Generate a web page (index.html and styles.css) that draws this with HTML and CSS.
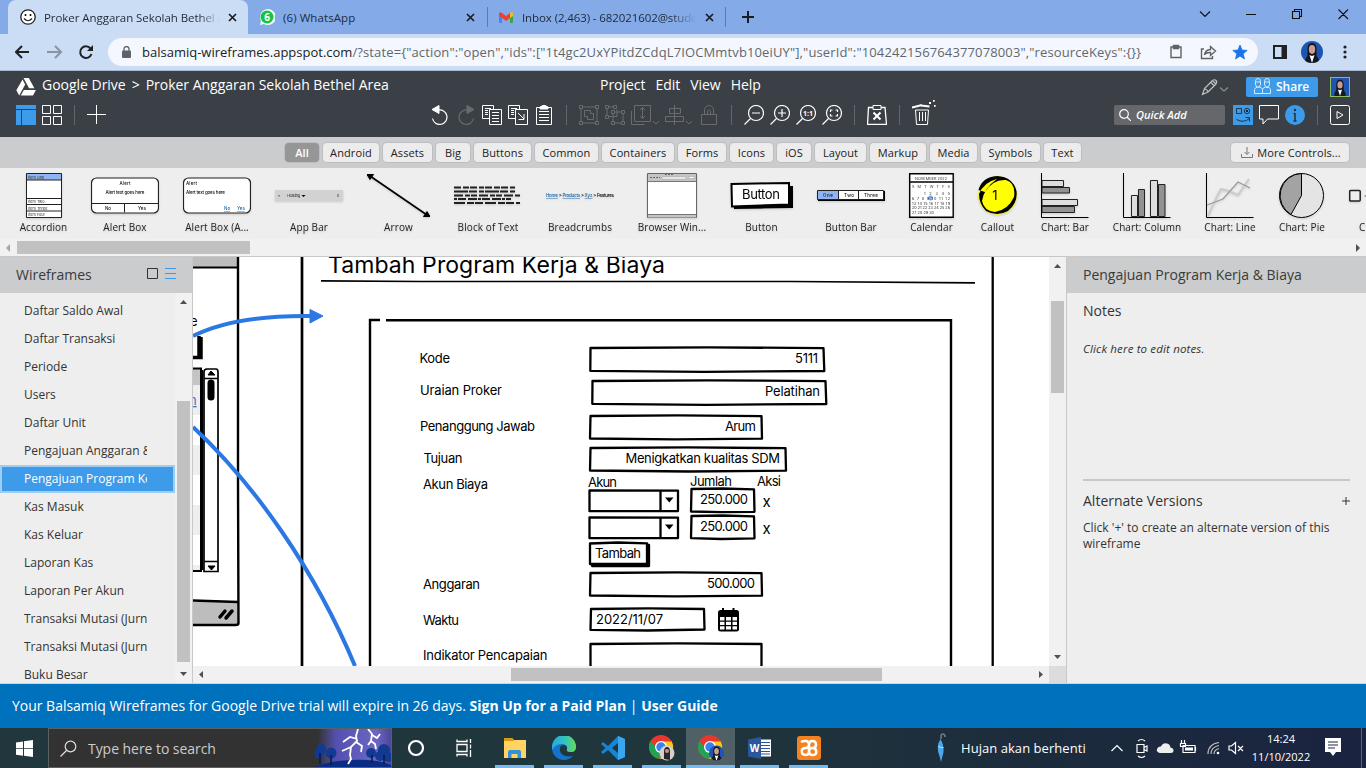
FILE: index.html
```html
<!DOCTYPE html>
<html lang="en">
<head>
<meta charset="utf-8">
<title>Proker Anggaran Sekolah Bethel Area</title>
<link rel="stylesheet" href="styles.css">
</head>
<body>
<svg class="defs" width="0" height="0">
  <defs>
    <g id="portrait">
      <rect width="22" height="22" fill="#1d55b0"/>
      <path d="M6.500 18V8q0-6 4.500-6t4.500 6v10z" fill="#15131c"/>
      <ellipse cx="11" cy="8.500" rx="3.200" ry="4.400" fill="#c99e90"/>
      <path d="M4 22q0-7 5-8l2 2 2-2q5 1 5 8z" fill="#17171f"/>
      <path d="M8.500 14l2.500 8 2.500-8-2.500 1z" fill="#fff"/>
    </g>
    <g id="chrome">
      <circle cx="12" cy="12" r="12" fill="#e8372c"/>
      <path d="M1.600 6A12 12 0 0 0 11 24l4-8-7-2z" fill="#22a353"/>
      <path d="M12 6.500h10.700A12 12 0 0 1 11 24l6-10z" fill="#fbc819"/>
      <circle cx="12" cy="12" r="6" fill="#fff"/><circle cx="12" cy="12" r="4.700" fill="#3c80ed"/>
    </g>
  </defs>
</svg>

<header class="tabs">
  <div class="tab tab-active">
    <svg width="16" height="16" viewBox="0 0 16 16"><circle cx="8" cy="8" r="7.200" fill="#fff" stroke="#222" stroke-width="1.300"/><circle cx="5.500" cy="6" r="1"/><circle cx="10.500" cy="6" r="1"/><path d="M4 9.500q4 4.500 8 0" fill="none" stroke="#222" stroke-width="1.200"/></svg>
    <span class="tab-title">Proker Anggaran Sekolah Bethel Area</span>
    <svg class="x" width="9" height="9" viewBox="0 0 9 9"><path d="M1 1l7 7M8 1l-7 7"/></svg>
  </div>
  <div class="tab tab-whatsapp">
    <svg width="16" height="16" viewBox="0 0 16 16"><path d="M1 16l1-4A8 8 0 1 1 5 15z" fill="#e9fff0"/><circle cx="8" cy="8" r="6.500" fill="#17c248"/><text x="8" y="12" text-anchor="middle" class="badge">6</text></svg>
    <span class="tab-title">(6) WhatsApp</span>
    <svg class="x" width="9" height="9" viewBox="0 0 9 9"><path d="M1 1l7 7M8 1l-7 7"/></svg>
  </div>
  <div class="tab tab-mail">
    <svg width="14" height="11" viewBox="0 0 14 11"><path d="M0 2h3v9H1q-1 0-1-1z" fill="#4285f4"/><path d="M11 2h3v8q0 1-1 1h-2z" fill="#34a853"/><path d="M11 1q3-2 3 1v2l-3 2z" fill="#fbbc04"/><path d="M0 2q0-3 3-1l4 3 4-3v5L7 9 3 6 0 4z" fill="#ea4335"/></svg>
    <span class="tab-title">Inbox (2,463) - 682021602@student</span>
    <svg class="x" width="9" height="9" viewBox="0 0 9 9"><path d="M1 1l7 7M8 1l-7 7"/></svg>
  </div>
  <svg class="newtab" width="12" height="12" viewBox="0 0 12 12"><path d="M6 0v12M0 6h12" stroke="#1b1d22" stroke-width="2"/></svg>
  <svg class="wincontrols" width="150" height="12" viewBox="1199 8 150 12" fill="none" stroke="#111" stroke-width="1.100"><path d="M1200 11.500l5 5 5-5M1246 14.500h10M1292.500 11.500h7v7h-7zM1294.500 11.500v-2h7v7h-2M1338.500 9.500l9.500 9.500M1348 9.500l-9.500 9.500"/></svg>
</header>

<nav class="address">
  <svg class="navicons" width="78" height="16" viewBox="15 44 78 16" fill="none" stroke="#202124" stroke-width="2"><path d="M29 52H16.500M22 46l-6 6 6 6"/><path d="M47 52h13M55 46l6 6-6 6" stroke="#8a92a3"/><path d="M90.500 48.500A5.800 5.800 0 1 0 91.500 54"/><path d="M93 45v6h-6z" fill="#202124" stroke="none"/></svg>
  <div class="urlbar">
    <svg width="9" height="12" viewBox="0 0 9 12"><rect y="4.500" width="9" height="7.500" rx="1" fill="#5f6368"/><path d="M2 5V3a2.500 2.500 0 0 1 5 0v2" fill="none" stroke="#5f6368" stroke-width="1.300"/></svg>
    <span class="url"><span class="host">balsamiq-wireframes.appspot.com</span><span class="query">/?state={"action":"open","ids":["1t4gc2UxYPitdZCdqL7IOCMmtvb10eiUY"],"userId":"104242156764377078003","resourceKeys":{}}</span></span>
    <svg class="urlicons" width="80" height="16" viewBox="1169 44 80 16" fill="none" stroke="#5f6368" stroke-width="1.400"><path d="M1171 47h10v10.500h-10z"/><path d="M1173.500 45.500h5v3h-5z" fill="#5f6368"/><path d="M1204 49h-2.500v9.500h11V56M1204.500 55q.5-5 6-5.500v-3l5 4.500-5 4.500v-3q-4-.3-6 2z"/><path d="M1240 45l2 5 5.200.4-4 3.400 1.300 5.200-4.500-2.900-4.500 2.900 1.300-5.200-4-3.400 5.200-.4z" fill="#1a73e8" stroke="#1a73e8" stroke-width=".8"/></svg>
  </div>
  <svg class="sidepanel" width="14" height="14" viewBox="0 0 14 14"><path d="M1 1h12v12H1z" fill="none" stroke="#202124" stroke-width="2"/><path d="M8.500 1H13v12H8.500z" fill="#202124"/></svg>
  <svg class="avatar-round" width="22" height="22" viewBox="0 0 22 22"><use href="#portrait"/></svg>
  <svg width="4" height="14" viewBox="0 0 4 14" fill="#202124"><circle cx="2" cy="2" r="1.600"/><circle cx="2" cy="7" r="1.600"/><circle cx="2" cy="12" r="1.600"/></svg>
</nav>

<section class="apphead">
  <div class="menurow">
    <svg class="drive" width="20" height="18" viewBox="0 0 20 18" fill="#fff"><path d="M7.500 0h5.300l5.600 10.300h-5.300zM6.500 1.600l2.700 5L3.200 17.500.3 12.300zM7.800 12h12.100l-2.900 5.500H4.800z"/></svg>
    <div class="crumb">Google Drive<b>&gt;</b>Proker Anggaran Sekolah Bethel Area</div>
    <div class="menu"><span>Project</span><span>Edit</span><span>View</span><span>Help</span></div>
    <svg class="pencil" width="28" height="18" viewBox="1201 77 28 18" fill="none" stroke="#bfc2c4" stroke-width="1.200"><path d="M1202.500 93.500l2-6 8-8q2-1.500 3.500 0t0 3.500l-8 8zM1210.500 81l4 4M1212.500 79.500l3.500 3.500M1204.500 88q3 .5 3.500 3"/><path d="M1220 86.500l4 3.500 4-3.500" stroke="#8d9194"/></svg>
    <div class="share"><svg width="17" height="16" viewBox="0 0 17 16" fill="none" stroke="#d5eafa" stroke-width="1"><path d="M1.500 6V3.500q0-3 2.500-3t2.500 3V6q0 3-2.500 3T1.500 6zM10.500 6V3.500q0-3 2.500-3t2.500 3V6q0 3-2.500 3t-2.500-3zM.5 15.500v-4q0-1.500 3-2.500l1 1 1-1q3 1 3 2.500v4zM8.500 11.500q0-1.500 3-2.500l1.500 1 1-1q2.500 1 2.500 2.500v4h-8M1.500 4h5M10.500 4h5"/></svg>Share</div>
    <svg class="avatar-square" width="20" height="20" viewBox="0 0 22 22"><use href="#portrait"/></svg>
  </div>
  <div class="toolrow">
    <svg width="20" height="20" viewBox="16 105 20 20" fill="#3d9be9"><path d="M16 105h20v4H16zM16 110h5v15h-5zM22 110h14v15H22z"/></svg>
    <svg width="20" height="20" viewBox="42 105 20 20" class="ln"><path d="M42.500 105.500h8v8h-8zM53.500 105.500h8v8h-8zM42.500 116.500h8v8h-8zM53.500 116.500h8v8h-8z"/></svg>
    <i class="div"></i>
    <svg width="20" height="20" viewBox="87 105 20 20" class="ln"><path d="M96.500 105v19M87 114.500h19"/></svg>
    <div class="tools">
      <svg width="20" height="20" viewBox="430 105 20 20" class="ln"><path d="M438 110a7.300 7.300 0 1 1-5.500 8.500" stroke-width="1.200"/><path d="M432 109.500l7-4v8z" fill="#fff"/></svg>
      <svg width="20" height="20" viewBox="456 105 20 20" class="dim"><path d="M468 110a7.300 7.300 0 1 0 5.500 8.500" stroke-width="1.200"/><path d="M474 109.500l-7-4v8z" fill="#686c6f"/></svg>
      <svg width="20" height="20" viewBox="482 105 20 20" class="ln"><path d="M489 118.500h-6.500v-13h11v4M489.500 109.500h12v15h-12zM485 108.500h6M485 110.500h3M485 112.500h3M485 114.500h3M492 112.500h7M492 115.500h7M492 118.500h7M492 121.500h7"/></svg>
      <svg width="20" height="20" viewBox="508 105 20 20" class="ln"><path d="M515 118.500h-6.500v-13h11v4M515.500 109.500h12v15h-12zM511 108.500h6M511 110.500h3M511 112.500h3M511 114.500h3M518 113l6 6M524 114v5.500h-5.500"/></svg>
      <svg width="20" height="20" viewBox="534 105 20 20" class="ln"><path d="M536.500 107.500h15v17h-15zM539 111.500h10M539 114.500h10M539 117.500h10M539 120.500h10"/><path d="M540 107l3-1.500h2l3 1.500v2h-8z" fill="#fff"/></svg>
      <i class="div"></i>
      <svg width="20" height="20" viewBox="579 105 20 20" class="dim"><path d="M579.500 105.500h3v3h-3zM595.500 105.500h3v3h-3zM579.500 121.500h3v3h-3zM595.500 121.500h3v3h-3zM582.500 107h13M582.500 123h13M581 108.500v13M597 108.500v13M584.500 110.500h6v3h3v6h-6v-3h-3z"/></svg>
      <svg width="20" height="20" viewBox="605 105 20 20" class="dim"><path d="M605.500 105.500h3v3h-3zM613.500 105.500h3v3h-3zM605.500 115.500h3v3h-3zM611.500 110.500h3v3h-3zM621.500 110.500h3v3h-3zM611.500 121.500h3v3h-3zM621.500 121.500h3v3h-3zM608.500 107h5M607 108.500v7M614.500 112h7M613 113.500v8M614.500 123h7M623 113.500v8M608 116.500h9v-7"/></svg>
      <svg width="28" height="20" viewBox="631 105 28 20" class="dim"><path d="M634.500 105.500h16v16h-16zM631.500 111v13.500h13M642.500 107.500v11M640 110l2.500-2.500L645 110M640 116l2.500 2.500 2.500-2.500M653 121l3 3 3-3"/></svg>
      <svg width="28" height="20" viewBox="665 105 28 20" class="dim"><path d="M674.500 105v20M669.500 108.500h11v5h-11zM665.500 116.500h18v5h-18zM686 121l3 3 3-3"/></svg>
      <svg width="20" height="20" viewBox="699 105 20 20" class="dim"><path d="M701.500 114.500h15v10h-15zM704.500 114v-4a4.500 4.500 0 0 1 9 0v4M707.500 114v-3q1.500-3 3 0v3"/></svg>
      <i class="div"></i>
      <svg width="20" height="20" viewBox="744 105 20 20" class="mag"><circle cx="756" cy="113" r="7.500"/><path d="M752 113h8M750.500 118.500l-6 6"/></svg>
      <svg width="20" height="20" viewBox="770 105 20 20" class="mag"><circle cx="782" cy="113" r="7.500"/><path d="M778 113h8M782 109v8M776.500 118.500l-6 6"/></svg>
      <svg width="20" height="20" viewBox="796 105 20 20" class="mag"><circle cx="808" cy="113" r="7.500"/><path d="M802.500 118.500l-6 6"/><text x="808" y="115.500" text-anchor="middle" class="oneone">1:1</text></svg>
      <svg width="20" height="20" viewBox="822 105 20 20" class="mag"><circle cx="834" cy="113" r="7.500"/><path d="M828.500 118.500l-6 6M832.500 110h-2v2M835.500 110h2v2M832.500 116h-2v-2M835.500 116h2v-2"/></svg>
      <i class="div"></i>
      <svg width="20" height="20" viewBox="867 105 20 20" class="ln"><path d="M868.500 107.500h16.500l1.500 17h-19z" stroke-width="1.300"/><path d="M873 105.500h8v4h-8z" fill="#3a4045"/><path d="M873.500 112.500l7 7M880.500 112.500l-7 7" stroke-width="2"/></svg>
      <i class="div"></i>
      <svg width="25" height="26" viewBox="912 99 25 26" class="ln"><path d="M915.500 110l1 14.500h11l1-14.500zM919.500 112v9M922.500 112v9M925.500 112v9"/><path d="M912 107.500l10-2.500M921 105.500l8.500 1" stroke-width="2"/><path d="M929 102h2v2h-2zM933 100h1.700v1.700H933zM934 105h1.700v1.700H934z" fill="#fff" stroke="none"/></svg>
    </div>
    <div class="quick"><svg width="12" height="12" viewBox="0 0 12 12" fill="none" stroke="#fff" stroke-width="1.200"><circle cx="5" cy="5" r="4.300"/><path d="M8 8l4 4"/></svg>Quick Add</div>
    <svg width="20" height="20" viewBox="0 0 20 20"><rect width="20" height="20" fill="#3d9be9"/><path d="M3.500 3.500h5v5h-5zM3.500 14.500q7 4 13-1M12.500 12.500h4v4" fill="none" stroke="#24353f"/><circle cx="14" cy="6" r="2.700" fill="none" stroke="#24353f"/><circle cx="14" cy="6" r="1"/></svg>
    <svg width="20" height="20" viewBox="0 0 20 20" class="ln"><path d="M.5.500h19v13.500H8.500l-4.500 5v-5H.5z"/></svg>
    <svg width="20" height="20" viewBox="0 0 20 20"><circle cx="10" cy="10" r="10" fill="#3d9be9"/><path d="M10 8v8M8.500 8.500H10M8.500 16h3" stroke="#24353f" stroke-width="1.600"/><circle cx="10" cy="5" r="1.200" fill="#24353f"/></svg>
    <i class="div"></i>
    <svg width="20" height="20" viewBox="0 0 20 20" class="ln"><rect x=".5" y=".5" width="19" height="19" rx="2"/><path d="M7 6.500v7l6-3.500z"/></svg>
  </div>
</section>

<div class="cats">
  <div class="catgrid">
    <span class="on">All</span><span>Android</span><span>Assets</span><span>Big</span><span>Buttons</span><span>Common</span><span>Containers</span><span>Forms</span><span>Icons</span><span>iOS</span><span>Layout</span><span>Markup</span><span>Media</span><span>Symbols</span><span>Text</span>
  </div>
  <div class="more"><svg width="12" height="11" viewBox="0 0 12 11" fill="none" stroke="#777"><path d="M.5 7v3.500h11V7M6 0v7M3.500 5L6 7.500 8.500 5"/></svg>More Controls...</div>
</div>

<div class="library">
  <figure><svg width="36" height="46" viewBox="25 173 36 46"><path d="M25.500 173.500h35v44h-35z" fill="#fff" stroke="#222"/><path d="M26 174h34v6H26z" fill="#8fb4f3"/><path d="M26 180h34M26 198.500h34M26 204.500h34M26 211h34" stroke="#222"/><g class="tiny"><text x="27" y="178.500">Item One</text><text x="27" y="203">Item Two</text><text x="27" y="209.500">Item Three</text><text x="27" y="216">Item Four</text></g></svg><figcaption>Accordion</figcaption></figure>
  <figure><svg width="68" height="46" viewBox="91 173 68 46"><rect x="91.500" y="178" width="67" height="35" rx="5" fill="#fff" stroke="#222" stroke-width="1.200"/><path d="M92 203.500h66M124.500 203.500v9" stroke="#222"/><g class="small"><text x="125" y="185" text-anchor="middle" textLength="11">Alert</text><text x="125" y="194" text-anchor="middle" textLength="39">Alert text goes here</text><text x="108" y="210" text-anchor="middle">No</text><text x="142" y="210" text-anchor="middle">Yes</text></g></svg><figcaption>Alert Box</figcaption></figure>
  <figure><svg width="68" height="46" viewBox="183 173 68 46"><rect x="183.500" y="178" width="67" height="35" rx="5" fill="#fff" stroke="#222" stroke-width="1.200"/><g class="small"><text x="186" y="185" textLength="11">Alert</text><text x="186" y="194" textLength="39">Alert text goes here</text><text x="224" y="210" class="lnk">No</text><text x="237" y="210" class="lnk">Yes</text></g></svg><figcaption>Alert Box (A...</figcaption></figure>
  <figure><svg width="68" height="46" viewBox="275 173 68 46"><path d="M275 190h68v11h-68z" fill="#d2d2d2"/><g class="tiny"><text x="278" y="197">≡</text><text x="287" y="197" textLength="13">Heading</text></g><path d="M301.500 195h4l-2 2z"/><path d="M338 194v3" stroke="#555"/></svg><figcaption>App Bar</figcaption></figure>
  <figure><svg width="63" height="46" viewBox="367 173 63 46"><path d="M370 176l57 39" stroke="#000" stroke-width="1.700"/><path d="M367 174.500l6.500 0-3.500 5zM430 216.500l-6.500 0 3.500-5z" stroke="#000"/></svg><figcaption>Arrow</figcaption></figure>
  <figure><svg width="68" height="46" viewBox="454 173 68 46" stroke="#222" stroke-width="2"><path d="M454 187.500h62" stroke-dasharray="7 2 6 1 7 2 5 1"/><path d="M454 191.500h61" stroke-dasharray="14 1 8 2 5 1"/><path d="M454 195.500h67" stroke-dasharray="9 2 5 1 6 2"/><path d="M454 199h57" stroke-dasharray="3 1 8 2 9 1"/><path d="M454 203h66" stroke-dasharray="11 2 7 1 8 2"/></svg><figcaption>Block of Text</figcaption></figure>
  <figure><svg width="68" height="46" viewBox="546 173 68 46" class="crumbs"><text x="546" y="197" textLength="68"><tspan class="lnk">Home</tspan> &gt; <tspan class="lnk">Products</tspan> &gt; <tspan class="lnk">Xyz</tspan> &gt; Features</text></svg><figcaption>Breadcrumbs</figcaption></figure>
  <figure><svg width="50" height="46" viewBox="647 173 50 46"><path d="M647.500 173.500h49v44h-49z" fill="#fff" stroke="#666"/><path d="M648 174h48v7.500h-48zM648 214.500h48v3h-48z" fill="#c4c4c4"/><path d="M648 181.500h48M648 214.500h48" stroke="#777"/><path d="M662 177h24v2h-24zM689 176.500h5v2h-5z" fill="#fff" stroke="#999" stroke-width=".5"/><path d="M650 177.500h10M665 174.500h8" stroke="#666" stroke-dasharray="2 1"/></svg><figcaption>Browser Win...</figcaption></figure>
  <figure><svg width="63" height="46" viewBox="730 173 63 46"><path d="M733 186h60v22l-59 1z"/><path d="M731.500 184l57.500-1v21.500l-57 2z" fill="#fff" stroke="#000" stroke-width="2"/><text x="761" y="199" text-anchor="middle" class="btntext" textLength="38">Button</text></svg><figcaption>Button</figcaption></figure>
  <figure><svg width="68" height="46" viewBox="817 173 68 46"><path d="M818 191h67v10h-67z"/><path d="M817.500 190.500h66v9h-66z" fill="#fff" stroke="#222"/><path d="M818 191h20v8h-20z" fill="#8fb4f3"/><path d="M838.500 190v9.500M858.500 190v9.500" stroke="#222"/><g class="small"><text x="828" y="197" text-anchor="middle" textLength="10">One</text><text x="849" y="197" text-anchor="middle" textLength="10">Two</text><text x="871" y="197" text-anchor="middle" textLength="14">Three</text></g></svg><figcaption>Button Bar</figcaption></figure>
  <figure><svg width="45" height="46" viewBox="909 173 45 46"><path d="M909.700 173.700h43.500v43.500h-43.500z" fill="#fff" stroke="#000" stroke-width="1.400"/><path d="M910 182h43" stroke="#000" stroke-width="1.300"/><circle cx="930.500" cy="198" r="2.500" fill="#7ba7e0"/><g class="tiny"><text x="931" y="179.500" text-anchor="middle" textLength="32">NOVEMBER 2022</text><text x="912" y="187.500" textLength="38">S  M  T  W  T  F  S</text><text x="924" y="194.500" textLength="26">1 2 3 4 5</text><text x="912" y="199.500" textLength="38">6 7 8 9 10 11 12</text><text x="912" y="204.500" textLength="38">13 14 15 16 17 18 19</text><text x="912" y="209" textLength="38">20 21 22 23 24 25 26</text><text x="912" y="213.500" textLength="22">27 28 29 30</text></g></svg><figcaption>Calendar</figcaption></figure>
  <figure><svg width="39" height="46" viewBox="978 173 39 46"><circle cx="997.500" cy="195.500" r="19.300" fill="#ff0"/><path d="M978.500 190Q982 177 997 176Q1013 177 1016.500 191Q1018 203 1008 211Q997 217 986 211Q979 204 979 194Q984 182 997 179Q984 188 982 201Q984 211 995 212Q1008 210 1014 197Q1016 183 1006 180Q993 179 985 192Z" fill-rule="evenodd"/><text x="995" y="200" text-anchor="middle" class="btntext">1</text></svg><figcaption>Callout</figcaption></figure>
  <figure><svg width="48" height="46" viewBox="1041 173 48 46" stroke="#222"><path d="M1042 180.500h21.500v6H1042zM1042 199.500h35.500v6H1042z" fill="#ddd"/><path d="M1042 187.500h27.500v5.500H1042zM1042 206.500h32.500v6H1042z" fill="#929292"/><path d="M1041.500 173v44.500h47" fill="none" stroke="#000"/></svg><figcaption>Chart: Bar</figcaption></figure>
  <figure><svg width="48" height="46" viewBox="1123 173 48 46" stroke="#222"><path d="M1131.500 195.500h6v21h-6zM1150.500 180.500h7v36h-7z" fill="#ddd"/><path d="M1138.500 189.500h6v27h-6zM1158.500 184.500h6.500v32h-6.500z" fill="#929292"/><path d="M1123.500 173v44.500h47" fill="none" stroke="#000"/></svg><figcaption>Chart: Column</figcaption></figure>
  <figure><svg width="48" height="46" viewBox="1206 173 48 46" fill="none"><path d="M1208 216q8-18 13-27l8 2 9 4 11-16" stroke="#ccc" stroke-width="2"/><path d="M1207 205l16-6 15-17 12 6" stroke="#999" stroke-width="1.200"/><path d="M1206.500 173v44.500h47" stroke="#000"/></svg><figcaption>Chart: Line</figcaption></figure>
  <figure><svg width="46" height="46" viewBox="1279 173 46 46" stroke="#000"><circle cx="1301.500" cy="195.500" r="22" fill="#e4e4e4"/><path d="M1301.500 195.500l-10.500 19a22 22 0 0 1 10.500-41z" fill="#a3a3a3"/></svg><figcaption>Chart: Pie</figcaption></figure>
  <figure class="cut"><svg width="17" height="46" viewBox="1349 173 17 46"><rect x="1349.700" y="190.500" width="10.500" height="10.500" rx="1" fill="#eee" stroke="#222" stroke-width="1.500"/><path d="M1364.500 196h1.500" stroke="#555"/></svg><figcaption>C</figcaption></figure>
</div>

<div class="libscroll"><svg width="4" height="8" viewBox="0 0 4 8"><path d="M4 0v8L0 4z" fill="#a3a3a3"/></svg><i></i><svg class="r" width="4" height="8" viewBox="0 0 4 8"><path d="M0 0v8l4-4z" fill="#505050"/></svg></div>

<main class="work">
  <aside class="left">
    <div class="panelhead"><span>Wireframes</span><svg width="29" height="12" viewBox="0 0 29 12" fill="none"><path d="M.5.500h10v10H.5z" stroke="#333"/><path d="M18 .5h11M18 5.500h11M18 10.500h11" stroke="#3d9be9"/></svg></div>
    <div class="listwrap">
      <ul class="list">
        <li><span>Daftar Saldo Awal</span></li><li><span>Daftar Transaksi</span></li><li><span>Periode</span></li><li><span>Users</span></li><li><span>Daftar Unit</span></li><li><span>Pengajuan Anggaran &amp; Biaya</span></li><li class="sel"><span>Pengajuan Program Kerja</span></li><li><span>Kas Masuk</span></li><li><span>Kas Keluar</span></li><li><span>Laporan Kas</span></li><li><span>Laporan Per Akun</span></li><li><span>Transaksi Mutasi (Jurn</span></li><li><span>Transaksi Mutasi (Jurn</span></li><li><span>Buku Besar</span></li>
      </ul>
      <svg class="vscroll" width="17" height="390" viewBox="0 0 17 390"><path d="M0 0h17v390H0z" fill="#f1f1f1"/><path d="M5 11l3.500-4 3.500 4zM5 379l3.500 4 3.500-4z" fill="#505050"/><path d="M2 108h13v261H2z" fill="#c1c1c1"/></svg>
    </div>
  </aside>

  <div class="center">
    <svg class="canvas" width="856" height="409" viewBox="193 257 856 409">
      <path d="M193 257h856v409H193z" fill="#fff"/>
      <path d="M193 257h44v10h-44zM193 602h45v23h-45z" fill="#bdbdbd"/>
      <path d="M193 369h8v16h-8z" fill="#c4c4c4"/>
      <path d="M193 385h8v30h-8zM193 445h8v30h-8zM193 505h8v30h-8zM193 565h8v6h-8z" fill="#eee"/>
      <g class="ink">
        <path d="M193 267.500h45" stroke-width="2"/><path d="M238 257V480L238.500 623q0 2-3 2H193M193 600.500l45 1.500" stroke-width="2.400"/>
        <path d="M199 336v20M193 357.500h8V337" stroke-width="3.500"/>
        <path d="M193 368.500h8v202.500h-8" stroke-width="2"/><path d="M202 370v200" stroke-width="2.500"/>
        <path d="M204 372q0-3 3-3h9q2 0 2 3v199.500h-14zM204 378.500h14M204 561.500h14" stroke-width="1.700"/>
        <path d="M211 383v14" stroke-width="7" stroke-linecap="round"/>
        <path d="M208 375l3-4 4 4zM208 566h7l-3.500 4z" fill="#000" stroke-width="1"/>
        <path d="M220 617l5-6M226 618l6-7" stroke-width="3.500" stroke-linecap="round"/>
        <path d="M302 257v409" stroke-width="2.700"/><path d="M992.700 257v409" stroke-width="2.300"/>
        <path d="M321 280.800l100 .7h370l184 1.300" stroke-width="1.700"/>
        <path d="M380 320h-10v346M386 320.200l200 0 365 0v346" stroke-width="2.400"/>
      </g>
      <text x="190" y="326" class="wf">e</text><text x="189" y="405" class="wf link">n</text>
      <g fill="none" stroke="#2b78e4" stroke-width="4"><path d="M193 336Q235 315 311 316"/><path d="M193 427C255 485 315 570 355 666"/><path d="M310 309.500l13 6.500-13 7z" fill="#2b78e4" stroke-width="1"/></g>
      <text x="328" y="273" class="wftitle" textLength="337">Tambah Program Kerja &amp; Biaya</text>
      <g class="box">
        <path d="M590.500 348l117-.7 116 .9.8 22.800-120 .8-114-1z"/>
        <path d="M592.500 381l117-.7 116 .9.8 22.800-120 .8-114-1z"/>
        <path d="M590.500 416l87-.6 84 .8.500 22.500-87 .6-85-.8z"/>
        <path d="M590.500 448l97-.6 98 .8.500 22.500-97 .8-99-1z"/>
        <path d="M589.500 490.500l88.500.2v20.300l-88.500.2zM589.500 517.500l88.500.2V538l-88.500.2zM660.500 491v20M660.500 518v20"/>
        <path d="M691.500 489l31-.5 31.500.8.500 22.500-33 .4-30.500-.7zM691.500 516l31-.5 31.500.8.500 22-33 .7-30.500-.9z"/>
        <path d="M591 545h58v21h-57z" fill="#000"/><path d="M590 543.500l28-1 29 .8v20.400l-57 .3z"/>
        <path d="M590.500 573l87-.6 84 .8.500 22.500-87 .6-85-.8z"/>
        <path d="M591 609l57-.6 56 .6.500 20.500-57 1-57-.6z"/>
        <path d="M590.500 680v-36l87-.7 84 .7v36"/>
      </g>
      <path d="M665 497.500h8.500l-4.200 5zM665 524.500h8.500l-4.200 5z"/>
      <g><rect x="718" y="610" width="21" height="21.500" rx="2.500"/><path d="M723 608v4M733.500 608v4" stroke="#000" stroke-width="2"/><path d="M720 617h4.500v3.500H720zM726 617h5v3.500h-5zM732.500 617h4.500v3.500h-4.500zM720 621.800h4.500v3.200H720zM726 621.800h5v3.200h-5zM732.500 621.800h4.500v3.200h-4.500zM720 626.300h4.500v3.200H720zM726 626.300h5v3.200h-5zM732.500 626.300h4.500v3.200h-4.500z" fill="#fff"/></g>
      <g class="wf">
        <text x="419.500" y="363" textLength="30.500">Kode</text><text x="420" y="395" textLength="82">Uraian Proker</text><text x="420" y="431" textLength="115">Penanggung Jawab</text><text x="423.500" y="463" textLength="39">Tujuan</text><text x="423" y="489" textLength="65">Akun Biaya</text><text x="423" y="589" textLength="57">Anggaran</text><text x="423" y="625" textLength="36">Waktu</text><text x="423" y="660" textLength="124.500">Indikator Pencapaian</text>
        <text x="795" y="363" textLength="23">5111</text><text x="765" y="396" textLength="55">Pelatihan</text><text x="725" y="431" textLength="31">Arum</text><text x="625.500" y="463" textLength="154.500">Menigkatkan kualitas SDM</text>
        <text x="588" y="487" textLength="29">Akun</text><text x="690" y="486" textLength="42">Jumlah</text><text x="757" y="486" textLength="24">Aksi</text>
        <text x="700" y="504" textLength="48">250.000</text><text x="700" y="531" textLength="48">250.000</text><text x="762.500" y="507" class="cross">x</text><text x="762.500" y="534" class="cross">x</text>
        <text x="595" y="558" textLength="46">Tambah</text><text x="707" y="588" textLength="48">500.000</text><text x="596" y="624" textLength="67">2022/11/07</text>
      </g>
    </svg>
    <svg class="cv" width="17" height="409" viewBox="0 0 17 409"><path d="M5 11l3.500-4 3.500 4zM5 398l3.500 4 3.500-4z" fill="#505050"/><path d="M2 44h13v92H2z" fill="#c1c1c1"/></svg>
    <svg class="ch" width="856" height="18" viewBox="193 666 856 18"><path d="M203 671v7l-4-3.500zM1039 671v7l4-3.500z" fill="#505050"/><path d="M511 668h371v13H511z" fill="#c1c1c1"/></svg>
    <i class="corner"></i>
  </div>

  <aside class="right">
    <div class="panelhead">Pengajuan Program Kerja &amp; Biaya</div>
    <div class="props">
      <h3>Notes</h3>
      <p class="hint">Click here to edit notes.</p>
      <div class="alt"><h3>Alternate Versions</h3><svg width="8" height="8" viewBox="0 0 8 8"><path d="M4 0v8M0 4h8" stroke="#333"/></svg></div>
      <p>Click '+' to create an alternate version of this wireframe</p>
    </div>
  </aside>
</main>

<div class="trial"><span class="t1">Your Balsamiq Wireframes for Google Drive trial will expire in 26 days.</span>&nbsp;<b>Sign Up for a Paid Plan</b>&nbsp;|&nbsp;<b>User Guide</b></div>

<footer class="taskbar">
  <svg class="start" width="17" height="17" viewBox="0 0 17 17" fill="#fff"><path d="M0 2.400l7-1v6.800H0zM8 1.200L17 0v8.200H8zM0 9h7v6.700l-7-1zM8 9h9v8l-9-1.200z"/></svg>
  <div class="search">
    <svg width="17" height="17" viewBox="0 0 17 17" fill="none" stroke="#ddd" stroke-width="1.200"><circle cx="10.500" cy="6.500" r="5.300"/><path d="M6.500 10.500L.5 16.500"/></svg>
    <span>Type here to search</span>
    <svg class="storm" width="79" height="38" viewBox="312 729 79 38">
      <defs><linearGradient id="sky"><stop offset="0" stop-color="#5b56b4" stop-opacity="0"/><stop offset=".25" stop-color="#5450b0"/><stop offset=".8" stop-color="#6b67c4"/><stop offset="1" stop-color="#4b4695"/></linearGradient></defs>
      <path d="M318 729h73v39h-73z" fill="url(#sky)"/>
      <path d="M312 768q15-7 40-8t39 5v3z" fill="#0b2c83"/>
      <g fill="#133a92"><circle cx="321" cy="749" r="5"/><circle cx="319" cy="754" r="4.500"/><circle cx="331" cy="753" r="5.500"/><circle cx="384" cy="750" r="6"/><circle cx="380" cy="756" r="5"/><circle cx="371" cy="753" r="5"/><circle cx="388" cy="757" r="5"/></g>
      <path d="M320 753v11M331 755v10M372 755v8M384 755v9" stroke="#07194f" stroke-width="1.500"/>
      <path d="M358 729l-2 7 1 5-6 6-1 8 1 4-3 5M357 739l-7-2-7 5M351 747l-9 4M356 742l6 4-1 6M368 729l4 5-1 7 4 3 1 5M372 735l5 3 3-4M371 741l-3 4" fill="none" stroke="#fff" stroke-width="1.800"/>
    </svg>
  </div>
  <div class="apps">
    <span class="app plain"><svg width="18" height="18" viewBox="0 0 18 18"><circle cx="9" cy="9" r="7" fill="none" stroke="#fff" stroke-width="2.200"/></svg></span>
    <span class="app plain"><svg width="16" height="18" viewBox="0 0 16 18" fill="none" stroke="#fff" stroke-width="1.300"><path d="M1 5.500h10v7H1zM1 .5v2h10v-2M1 17.500v-2h10v2M14.500 0v4M14.500 11v7M14.500 5.500v4"/></svg></span>
    <span class="app"><svg width="22" height="22" viewBox="0 0 22 22"><path d="M0 1h8l2 2h12v18H0z" fill="#ffd462"/><path d="M0 1h8l2 3H0z" fill="#d89b13"/><path d="M4 21v-6q0-2 2-2h9q2 0 2 2v6h-3.500v-4h-6v4z" fill="#3290dc"/></svg></span>
    <span class="app"><svg width="24" height="24" viewBox="0 0 24 24"><defs><linearGradient id="edge" x2="1"><stop offset="0" stop-color="#26a9dc"/><stop offset=".55" stop-color="#34c2bd"/><stop offset="1" stop-color="#66dc52"/></linearGradient></defs><path d="M0 12a12 12 0 0 1 24-1q0 5-5 5-5 0-4-3 1-3-3-4-5 0-4 6 2 7 13 5-4 4-9 4A12 12 0 0 1 0 12z" fill="#1573cb"/><path d="M0 11A12 12 0 0 1 24 11q0 5-5 5-5 0-4-3 1-4-4-5Q4 7 0 14z" fill="url(#edge)"/></svg></span>
    <span class="app"><svg width="24" height="24" viewBox="0 0 24 24"><path d="M17 0l7 3v18l-7 3L7 14l-5 4-2-2 4.500-4L0 8l2-2 5 4zM17 7l-6 5 6 5z" fill="#1785d4" fill-rule="evenodd"/><path d="M17 0l7 3v18l-7 3z" fill="#38a7ee"/></svg></span>
    <span class="app"><svg width="26" height="26" viewBox="0 0 26 26"><use href="#chrome"/><circle cx="18" cy="18" r="7.500" fill="#d4d1cc"/><path d="M15 24v-7q0-5 3-5t3 5v8z" fill="#2a2629"/><circle cx="18" cy="16" r="2" fill="#c49787"/></svg></span>
    <span class="app active"><svg width="26" height="26" viewBox="0 0 26 26"><use href="#chrome"/><clipPath id="round"><circle cx="18.500" cy="18" r="7.500"/></clipPath><g clip-path="url(#round)"><use href="#portrait" transform="translate(10.500 10) scale(.73)"/></g></svg></span>
    <span class="app"><svg width="23" height="22" viewBox="0 0 23 22"><path d="M12 2.500h11v17H12z" fill="#fff"/><path d="M13 5.500h9M13 8.500h9M13 11.500h9M13 14.500h9M13 17h9" stroke="#2b579a"/><path d="M0 2.500L13 0v22L0 19.500z" fill="#2b579a"/><text x="6.500" y="14.500" text-anchor="middle" class="w">W</text></svg></span>
    <span class="app"><svg width="24" height="24" viewBox="0 0 24 24"><rect width="24" height="24" rx="3" fill="#f5821f"/><path d="M4.500 6.500Q5 5 7.500 5h1Q12 5 12 8.500T8.500 12h7Q19 12 19.300 15.500T15.500 19Q12 19 12 15.500T15.500 12Q19 12 19 8.500T15.500 5Q12 5 12 8.500V15.500Q12 19 8.500 19T4.700 15.500Q4.700 12 8.500 12" fill="none" stroke="#fff" stroke-width="2.500"/></svg></span>
  </div>
  <svg class="umbrella" width="10" height="30" viewBox="0 0 10 30"><path d="M5 6V3q0-2 2-2t2 3" fill="none" stroke="#777" stroke-width="1.600"/><path d="M4.500 6q5 8 2 17l-1.500 6-1.500-6q-4-10 1-17z" fill="#4ba8ef"/><path d="M2 13q3 2.500 5.500 1.500" fill="none" stroke="#bfe0fb"/></svg>
  <span class="weather">Hujan akan berhenti</span>
  <svg class="tray" width="136" height="24" viewBox="1110 736 136 24" fill="none" stroke="#fff" stroke-width="1.200"><path d="M1111.500 751l5.500-5.500 5.500 5.500M1137 744.500h7v8h-7zM1144 747.500l3-1.500v5l-3-1.500M1138 741q3.500-3 7 0M1138 756q3.500 3 7 0M1183 745.500h12v7h-12zM1195.500 747v4M1181.500 740v3M1184.500 740v3M1180.500 743.500h5v3h-5z"/><path d="M1160 753q-4-1-3-4 1-3 4-2.500 2-4 6-3 3 .7 3.500 4 3 .5 3 3t-3 2.500z" fill="#eee" stroke="none"/><path d="M1185 747.500h8v3h-8z" fill="#fff" stroke="none"/><path d="M1208 754q0-10 11-11.500M1211 754q0-7 8-8.500M1214 754q0-4 5-5.500" stroke="#bbb"/><circle cx="1218" cy="753" r="1.300" fill="#fff" stroke="none"/><path d="M1229 746h2.500l4-3.500v11l-4-3.500h-2.500zM1238 746l5 5M1243 746l-5 5"/></svg>
  <div class="clock"><span>14:24</span><span>11/10/2022</span></div>
  <svg class="notif" width="16" height="20" viewBox="0 0 16 20"><path d="M0 0h16v14h-5l-3 4-3-4H0z" fill="#fff"/><path d="M3 4h10M3 7h10M3 10h7" stroke="#1c2940" stroke-width="1.200"/></svg>
  <i class="peek"></i>
</footer>
</body>
</html>
```
FILE: styles.css
```css
* { box-sizing: border-box; }
html, body { margin: 0; height: 768px; overflow: hidden; }
body { display: flex; flex-direction: column; width: 1366px; font-family: "Open Sans", "Noto Sans", sans-serif; font-size: 12px; color: #333; }
svg { display: block; flex: none; }
.defs { position: absolute; }

/* Browser tabs */
.tabs { height: 34px; flex: none; display: flex; align-items: center; background: #84abe8; color: #202b3d; font-size: 11.5px; padding-left: 8px; }
.tab { display: flex; align-items: center; height: 34px; white-space: nowrap; }
.tab-title { overflow: hidden; }
.tab-active { width: 240px; background: #cbdcf5; border-radius: 8px 8px 0 0; padding-left: 12px; gap: 8px; color: #1f2937; }
.tab-active .tab-title { width: 176px; letter-spacing: -.06px; mask-image: linear-gradient(90deg, #000 88%, transparent); }
.tab-whatsapp { width: 239px; padding-left: 11px; gap: 8px; }
.tab-whatsapp .tab-title { width: 175px; letter-spacing: .08px; }
.tab-mail { height: 20px; width: 239px; border: solid #5f7ba9; border-width: 0 1px; padding-left: 11px; gap: 9px; }
.tab-mail .tab-title { width: 174px; letter-spacing: -.1px; mask-image: linear-gradient(90deg, #000 85%, transparent); }
.x { fill: none; stroke: #1b1d22; stroke-width: 1.7; }
.badge { font: bold 10px "Open Sans", sans-serif; fill: #fff; }
.newtab { margin-left: 16px; }
.wincontrols { margin: -6px 17px 0 auto; }

/* Address row */
.address { height: 37px; flex: none; display: flex; align-items: center; background: #cbdcf5; border-bottom: 1px solid #a9b9d1; padding-left: 15px; }
.urlbar { margin-left: 15px; width: 1150px; height: 28px; border-radius: 14px; background: #f4f8fe; display: flex; align-items: center; padding-left: 14px; font-size: 13px; }
.url { margin-left: 11px; width: 1027px; white-space: nowrap; }
.host { color: #202124; }
.query { color: #62676d; letter-spacing: .127px; }
.sidepanel { margin-left: 15px; }
.avatar-round { border-radius: 50%; margin: 0 20px 0 14px; }

/* Application header */
.apphead { height: 66px; flex: none; background: #3a4045; color: #fff; }
.menurow { height: 29px; display: flex; align-items: center; padding-left: 16px; font-size: 14px; }
.drive { margin-top: 2px; }
.crumb { margin: -2px 0 0 6px; width: 558px; white-space: nowrap; letter-spacing: -.02px; }
.crumb b { margin: 0 6px; font-weight: 400; }
.menu { display: flex; gap: 10px; width: 601px; margin-top: -2px; letter-spacing: -.03px; }
.share { margin-left: 17px; margin-top: 2px; width: 72px; height: 20px; border-radius: 2px; background: #3d9be9; display: flex; align-items: center; padding: 0 0 1px 8px; font-size: 12px; font-weight: 600; gap: 5px; }
.avatar-square { margin-left: 12px; margin-top: 2px; border: 1px solid #8fbd62; }
.pencil { margin-top: 2px; }
.toolrow { height: 30px; display: flex; align-items: center; padding-left: 16px; gap: 6px; }
.ln, .mag { fill: none; stroke: #fff; stroke-width: 1; }
.mag { stroke-width: 1.2; }
.dim { fill: none; stroke: #686c6f; stroke-width: 1; }
.oneone { font: bold 7px "Open Sans", sans-serif; fill: #fff; stroke: none; }
.div { width: 1px; height: 20px; background: #62666a; margin: 0 6px; flex: none; }
.tools { display: flex; align-items: center; gap: 6px; margin-left: 317px; width: 678px; }
.tools svg:last-child { margin-top: -6px; }
.quick { width: 111px; height: 20px; border-radius: 2px; background: #65676a; display: flex; align-items: center; padding: 0 0 1px 5px; gap: 5px; font-style: italic; font-weight: 600; font-size: 11px; margin-right: 2px; }

/* Control categories */
.cats { height: 31px; flex: none; display: flex; align-items: center; background: #cacccd; padding-left: 285px; }
.catgrid { display: grid; column-gap: 4px; grid-template-columns: 34px 56px 49px 34px 57px 63px 72px 48px 43px 34px 51px 56px 47px 59px 37px; width: 946px; font-size: 11px; }
.catgrid span, .more { height: 19px; display: flex; align-items: center; justify-content: center; border-radius: 4px; background: #ececec; box-shadow: 0 0 0 1px #bcbebf; color: #222; white-space: nowrap; letter-spacing: .1px; }
.catgrid .on { background: #969696; color: #fff; font-weight: 600; }
.more { width: 118px; gap: 4px; font-size: 11px; padding-left: 2px; }

/* Control library */
.library { height: 71px; flex: none; overflow: hidden; background: #eee; display: grid; padding: 5px 0 0 20px; column-gap: 24px; grid-template-columns: 47px 68px 68px 68px 63px 68px 68px 68px 63px 68px 45px 39px 48px 68px 50px 46px 17px; }
.library figure { margin: 0; display: flex; flex-direction: column; align-items: center; filter: drop-shadow(0 1px 1px rgba(0,0,0,.15)); }
.library .cut { align-items: flex-start; }
.cut figcaption { padding-left: 10px; }
.library figcaption { font-size: 10px; line-height: 16px; white-space: nowrap; color: #222; letter-spacing: .1px; }
.tiny { font: 3.8px Inter, sans-serif; fill: #333; }
.small { font: 500 4.5px Inter, sans-serif; fill: #111; }
.crumbs { font: 500 4.5px Inter, sans-serif; }
.lnk { fill: #2069a8; text-decoration: underline; }
.btntext { font: 13px Inter, sans-serif; fill: #000; }
.libscroll { height: 18px; flex: none; background: #f1f1f1; border-bottom: 1px solid #c8c8c8; display: flex; align-items: center; padding: 0 6px; }
.libscroll i { width: 233px; height: 13px; background: #c1c1c1; margin-left: 7px; }
.libscroll .r { margin-left: auto; }

/* Workspace */
.work { height: 427px; flex: none; display: grid; grid-template-columns: 193px 873px 300px; border-bottom: 1px solid #d5d5d5; }
.left { background: #eee; border-right: 1px solid #c8c8c8; overflow: hidden; }
.panelhead { height: 36px; background: #cacccd; display: flex; align-items: center; padding: 0 16px 2px; font-size: 14px; color: #3a3a3a; white-space: nowrap; }
.left .panelhead { justify-content: space-between; padding-right: 16px; }
.listwrap { display: flex; height: 390px; }
.list { list-style: none; margin: 0; padding: 4px 0 0; width: 175px; height: 390px; overflow: hidden; }
.list li { height: 28px; line-height: 28px; padding-left: 24px; }
.list span { display: block; width: 123px; overflow: hidden; white-space: nowrap; }
.list .sel { line-height: 24px; padding-left: 22px; color: #fff; background: #3d9be9; border: 2px solid #9ecdf4; }
.center { display: grid; grid-template-columns: 856px 17px; grid-template-rows: 409px 17px; overflow: hidden; }
.cv, .ch { background: #f1f1f1; }
.corner { background: #dcdcdc; }
.ink { fill: none; stroke: #000; }
.box { fill: #fff; stroke: #000; stroke-width: 2.3; stroke-linejoin: round; }
.wf { font: 13px Inter, "Noto Sans", sans-serif; }
.link { fill: #3a73c9; text-decoration: underline; }
.cross { font-size: 15px; }
.wftitle { font: 23px Inter, "Noto Sans", sans-serif; }
.right { background: #eee; border-left: 1px solid #c8c8c8; }
.props { padding: 9px 16px; }
.props h3 { margin: 0; font-size: 14px; font-weight: 400; line-height: 18px; }
.props p { margin: 0; line-height: 16px; }
.props .hint { margin-top: 21px; height: 140px; border-bottom: 2px solid #c8c8c8; font-style: italic; font-size: 11.5px; letter-spacing: .15px; }
.alt { display: flex; align-items: center; justify-content: space-between; margin: 11px 0 10px; }

/* Trial banner */
.trial { height: 44px; flex: none; background: #0071bc; color: #fff; display: flex; align-items: center; padding: 0 0 2px 12px; font-size: 14px; white-space: nowrap; }
.t1 { letter-spacing: -.017px; }

/* Taskbar */
.taskbar { height: 40px; flex: none; display: flex; align-items: center; color: #fff; background: linear-gradient(90deg, #21373d, #20363d 50%, #1c2c3c 75%, #1a2340); }
.start { margin: 0 15px 0 16px; }
.search { width: 344px; height: 40px; background: #323232; border: 1px solid #596164; display: flex; align-items: center; padding-left: 11px; font-size: 14px; color: #ccc; }
.search span { margin-left: 11px; width: 224px; letter-spacing: -.05px; }
.apps { display: flex; height: 40px; width: 544px; }
.app { width: 39px; margin: 0 5px; height: 40px; border-bottom: 3px solid #76b9ed; display: flex; align-items: center; justify-content: center; flex: none; }
.plain { border-color: transparent; width: 38px; }
.plain + .app:not(.plain) { margin-left: 7px; }
.app svg { margin-top: 3px; }
.app.active { width: 49px; margin: 0; background: #4f6167; }
.w { font: bold 10px "Open Sans", sans-serif; fill: #fff; }
.weather { margin-left: 15px; width: 149px; font-size: 13px; white-space: nowrap; letter-spacing: .05px; }
.clock { width: 70px; display: flex; flex-direction: column; align-items: center; font-size: 11px; line-height: 18px; padding-bottom: 1px; }
.notif { margin-left: 9px; }
.peek { width: 1px; height: 40px; background: #596579; margin-left: 20px; }
```
